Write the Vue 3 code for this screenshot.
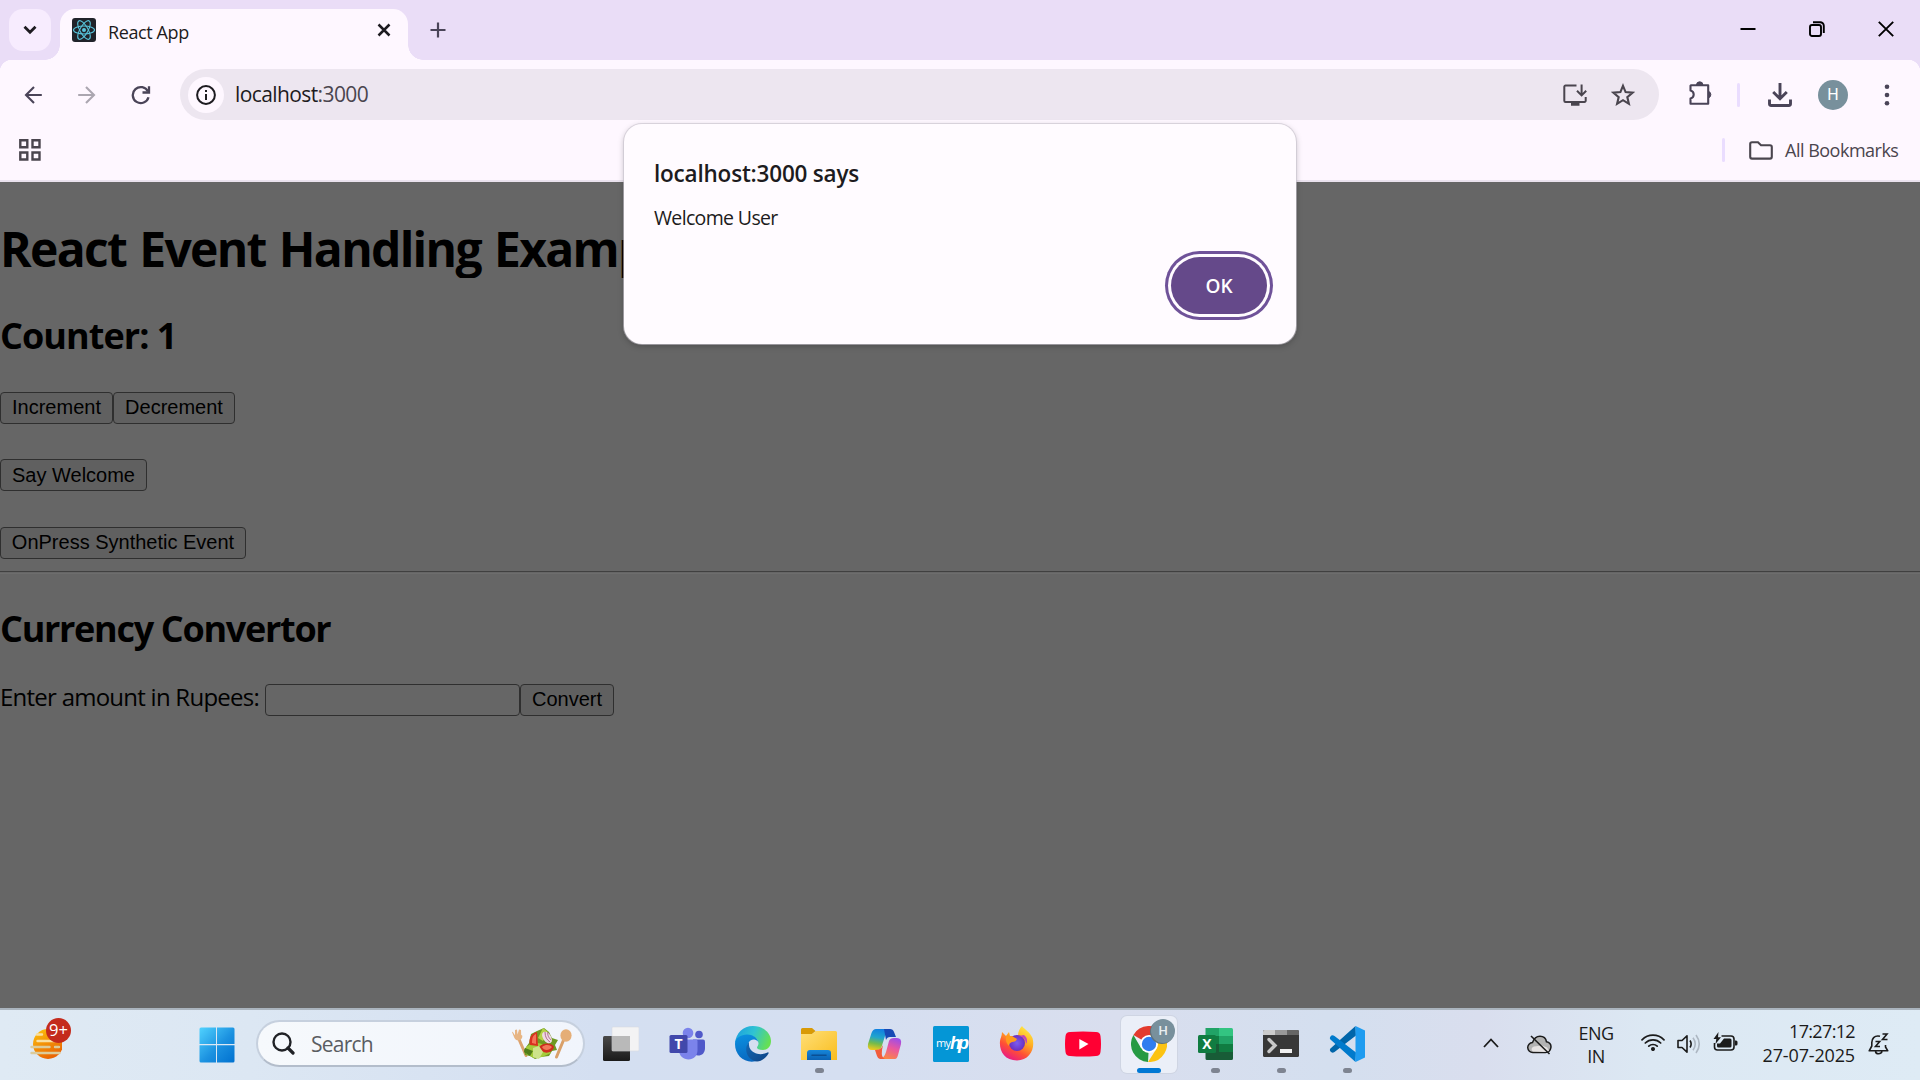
<script setup>
import { ref } from 'vue'

const count = ref(1)
const amount = ref('')
</script>

<template>
  <div class="screen">
    <header class="tabstrip">
      <button class="tab-search" aria-label="Search tabs">
        <svg width="14" height="10" viewBox="0 0 14 10"><path d="M1.500 1.800 7 7.200l5.500-5.400" fill="none" stroke="#1d1b20" stroke-width="2.800" /></svg>
      </button>
      <div class="tab">
        <svg class="favicon" width="24" height="24" viewBox="0 0 24 24">
          <rect width="24" height="24" rx="3" fill="#20232a" />
          <g fill="none" stroke="#58c4dc" stroke-width="1.100">
            <ellipse cx="12" cy="12" rx="10.500" ry="4" />
            <ellipse cx="12" cy="12" rx="10.500" ry="4" transform="rotate(60 12 12)" />
            <ellipse cx="12" cy="12" rx="10.500" ry="4" transform="rotate(120 12 12)" />
          </g>
          <circle cx="12" cy="12" r="2" fill="#58c4dc" />
        </svg>
        <span class="tab-title">React App</span>
        <svg class="tab-close" width="14" height="14" viewBox="0 0 14 14"><path d="m1.500 1.500 11 11m0-11-11 11" stroke="#1d1b20" stroke-width="2.500" /></svg>
      </div>
      <svg class="new-tab" width="16" height="16" viewBox="0 0 16 16"><path d="M8 .5v15M.5 8h15" stroke="#4a4458" stroke-width="2.200" /></svg>
      <div class="window-controls">
        <svg width="16" height="16" viewBox="0 0 16 16"><path d="M.5 8h15" stroke="#000" stroke-width="2" /></svg>
        <svg width="16" height="16" viewBox="0 0 16 16" fill="none" stroke="#000" stroke-width="1.900"><rect x="1" y="4" width="11" height="11" rx="2" /><path d="M4 1.200h7.200a3.600 3.600 0 0 1 3.600 3.600V12" /></svg>
        <svg width="16" height="16" viewBox="0 0 16 16"><path d="m.8.8 14.400 14.400m0-14.400L.8 15.200" stroke="#000" stroke-width="1.900" /></svg>
      </div>
    </header>

    <nav class="toolbar">
      <svg width="18" height="18" viewBox="0 0 18 18" class="nav-icon"><path d="M17.800 9H2m8-8L2 9l8 8" fill="none" stroke="#4a4458" stroke-width="2.100" /></svg>
      <svg width="18" height="18" viewBox="0 0 18 18" class="nav-icon"><path d="M.2 9H16M8 1l8 8-8 8" fill="none" stroke="#aba6b0" stroke-width="2.100" /></svg>
      <svg width="20" height="20" viewBox="0 0 20 20" class="nav-icon reload"><path d="M17.500 12.200A8 8 0 1 1 17 6.600" fill="none" stroke="#4a4458" stroke-width="2.300" /><path d="M18 1.200v6.300h-6.500" fill="none" stroke="#4a4458" stroke-width="2.300" /></svg>
      <div class="omnibox">
        <span class="site-info">
          <svg width="20" height="20" viewBox="0 0 20 20"><circle cx="10" cy="10" r="8.900" fill="none" stroke="#1d1b20" stroke-width="2" /><path d="M10 9v6M10 5v2" stroke="#1d1b20" stroke-width="2" /></svg>
        </span>
        <span class="url">localhost<span class="port">:3000</span></span>
        <svg class="install" width="24" height="22" viewBox="0 0 24 22" fill="none" stroke="#4a454e" stroke-width="2"><path d="M13.500 1.500h-11a1.200 1.200 0 0 0-1.200 1.200v14.100A1.200 1.200 0 0 0 2.500 18h19a1.200 1.200 0 0 0 1.200-1.200V13" /><path d="M18.600.5V11M14 6.800l4.600 4.600 4.600-4.600" /><path d="M8 20h8.500" stroke-width="3.500" /></svg>
        <svg width="24" height="24" viewBox="0 0 24 24" fill="none" stroke="#4a454e" stroke-width="2.100"><path d="m12 2.800 2.600 6.300 6.900.6-5.200 4.400 1.600 6.700L12 17.200l-5.900 3.600 1.600-6.700-5.200-4.400 6.900-.6z" /></svg>
      </div>
      <svg class="puzzle" width="25" height="25" viewBox="0 0 25 25"><path d="M3 4.200h17.200v18.600H2.500v-5.300a4.100 4.100 0 0 0 0-8V4.700z" fill="none" stroke="#4a4458" stroke-width="2.100" stroke-linejoin="round" /><path d="M8.500 4a3.200 3.200 0 0 1 6.400 0zM20.500 10.300a3.500 3.500 0 0 1 0 6.600z" fill="#4a4458" stroke="#4a4458" /></svg>
      <i class="divider"></i>
      <svg class="download" width="24" height="24" viewBox="0 0 24 24" fill="none" stroke="#4a4458" stroke-width="2.900"><path d="M12 0v15M5.200 9l6.800 6.800L18.800 9" /><path d="M1.500 16.500v4.300q0 1.700 1.700 1.700h17.600q1.700 0 1.700-1.700v-4.300" /></svg>
      <span class="avatar">H</span>
      <svg class="menu" width="6" height="22" viewBox="0 0 6 22" fill="#4a4458"><circle cx="3" cy="2.800" r="2.300" /><circle cx="3" cy="11" r="2.300" /><circle cx="3" cy="19.200" r="2.300" /></svg>
    </nav>

    <div class="bookmarks">
      <svg width="22" height="22" viewBox="0 0 22 22" fill="none" stroke="#4a454e" stroke-width="2.400"><path d="M1.300 1.300h7v7h-7zM13.500 1.300h7v7h-7zM1.300 13.500h7v7h-7zM13.500 13.500h7v7h-7z" /></svg>
      <i class="divider"></i>
      <svg class="folder" width="24" height="19" viewBox="0 0 24 19"><path d="M1.200 3q0-1.800 1.800-1.800h6l3 3h9q1.800 0 1.800 1.800v9.800q0 1.800-1.800 1.800H3q-1.800 0-1.800-1.800z" fill="none" stroke="#4a454e" stroke-width="2.100" /></svg>
      <span class="all">All Bookmarks</span>
    </div>

    <main class="page">
      <h1>React Event Handling Example</h1>
      <h2 class="counter">Counter: {{ count }}</h2>
      <div class="row">
        <button class="w-inc" @click="count++">Increment</button><button class="w-dec" @click="count--">Decrement</button>
      </div>
      <div class="row gap-a"><button class="w-say">Say Welcome</button></div>
      <div class="row gap-b"><button class="w-press">OnPress Synthetic Event</button></div>
      <hr />
      <h2 class="currency">Currency Convertor</h2>
      <div class="row gap-c">
        <label for="amount">Enter amount in Rupees:</label>
        <input id="amount" v-model="amount" type="text" /><button class="w-conv">Convert</button>
      </div>
    </main>

    <section class="dialog" role="alertdialog">
      <h3>localhost:3000 says</h3>
      <p>Welcome User</p>
      <button class="ok">OK</button>
    </section>

    <footer class="taskbar">
      <div class="widgets">
        <svg width="32" height="32" viewBox="0 0 32 32">
          <defs>
            <linearGradient id="sun" x1="0" y1="0" x2=".5" y2="1"><stop offset="0" stop-color="#fdc60b" /><stop offset="1" stop-color="#ea6504" /></linearGradient>
          </defs>
          <circle cx="18" cy="16" r="15" fill="url(#sun)" />
          <g stroke="#f9dfa0" stroke-width="2.400" stroke-linecap="round"><path d="M7 6.500h5M7.500 13H30" /><path d="M1.500 19h18M25 19h4M1.500 25h28" stroke="#dccb9a" /></g>
        </svg>
        <span class="badge">9+</span>
      </div>

      <svg class="start" width="36" height="36" viewBox="0 0 36 36">
        <defs>
          <linearGradient id="win" gradientUnits="userSpaceOnUse" x1="0" y1="0" x2="36" y2="36"><stop offset="0" stop-color="#52d4ff" /><stop offset=".55" stop-color="#1b91e0" /><stop offset="1" stop-color="#0070cf" /></linearGradient>
        </defs>
        <path d="M2 .5h15v16.500H.5V2Q.5.500 2 .5zM18 .5h16q1.500 0 1.500 1.500v15H18zM.5 18.200H17v17.300H2q-1.500 0-1.500-1.500zM18 18.200h17.500V34q0 1.500-1.500 1.500H18z" fill="url(#win)" />
      </svg>

      <div class="search">
        <svg width="23" height="23" viewBox="0 0 23 23" fill="none" stroke="#202226"><circle cx="10" cy="10" r="8.500" stroke-width="2.400" /><path d="m16 16 5 5" stroke-width="3.200" stroke-linecap="round" /></svg>
        <span>Search</span>
        <svg class="salad" width="62" height="32" viewBox="0 0 62 32">
          <path d="m7 9 8 18.500" stroke="#dca36e" stroke-width="3" stroke-linecap="round" />
          <path d="M1 4c1-1 2 3 3 3V2l2-.5.500 5L8 1.500l2 .5.200 5 1 .5c1 5-6 7-8 2z" fill="#e7b583" />
          <path d="M53 11 45.500 29" stroke="#d9a069" stroke-width="3" stroke-linecap="round" />
          <ellipse cx="55" cy="7.500" rx="5.600" ry="6.200" fill="#e5ae77" />
          <path d="m13 22 5-7 2-9 6-3 7-3 5 4 3 6 6 2-3 5 2 5-5 1-3 5-8 1-6 2-5-3-5-1z" fill="#6f9a22" />
          <path d="m15 19 8-5 8 2 9 9-9 4-8 1-8-4z" fill="#a4cc3a" />
          <path d="M19 17c-2-7 2-12 7-13l1 14z" fill="#d93120" />
          <path d="M21 15c0-5 1-8 4-9l0 10z" fill="#f47458" />
          <path d="M27 10 32 0l5 4-5 9z" fill="#b4d246" />
          <path d="M28 19c6-6 14-3 15 0-2 7-12 8-15 0z" fill="#ce2d1e" />
          <path d="M31 19c4-3 8-2 10 0-3 4-8 4-10 0z" fill="#f2785a" />
          <ellipse cx="36" cy="9.500" rx="4" ry="6.500" transform="rotate(-35 36 9.500)" fill="#efdbe4" />
          <path d="M34 4c0 5 2 8 5 10M37 4c-1 3 1 6 3 8" fill="none" stroke="#af6993" />
          <path d="m22 20 6-2 4 6-4 7-6-2z" fill="#cde38a" /><path d="m14 20 8 3-3 5-6-4z" fill="#507d1a" />
        </svg>
      </div>

      <div class="apps">
        <div class="app">
          <svg width="36" height="36" viewBox="0 0 36 36">
            <defs><linearGradient id="tv" x1="0" y1="0" x2="0" y2="1"><stop offset="0" stop-color="#494949" /><stop offset="1" stop-color="#1a1a1a" /></linearGradient></defs>
            <rect y="10" width="27" height="25" rx="1.500" fill="url(#tv)" /><rect x="9" y="1" width="27" height="24" rx="1" fill="#f3f3f4" stroke="#d9dbe0" stroke-width=".6" /><path d="M9 10h18v15H10q-1 0-1-1z" fill="#b9b9b9" />
          </svg>
        </div>
        <div class="app">
          <svg width="36" height="36" viewBox="0 0 36 36">
            <circle cx="19" cy="7" r="5.300" fill="#7b83eb" /><circle cx="30" cy="8.500" r="3.800" fill="#5059c9" />
            <path d="M24 13.500h10q2 0 2 2V22c0 5-3 7.500-7 7.500S24 26 24 23z" fill="#5059c9" /><path d="M10 13.500h17q1.500 0 1.500 1.500v9c0 6-4 9.500-9 9.500S10 30 10 24z" fill="#7b83eb" />
            <rect x=".5" y="9" width="18" height="18" rx="1.500" fill="#4148ab" /><text x="9.500" y="23" class="glyph" font-size="14" fill="#fff" text-anchor="middle">T</text>
          </svg>
        </div>
        <div class="app">
          <svg width="36" height="36" viewBox="0 0 36 36">
            <defs>
              <linearGradient id="ed1" x1="0" y1=".2" x2="1" y2=".5"><stop offset="0" stop-color="#1a9fe0" /><stop offset=".5" stop-color="#30c3d2" /><stop offset="1" stop-color="#66e052" /></linearGradient>
              <linearGradient id="ed2" x1=".3" y1="0" x2=".5" y2="1"><stop offset="0" stop-color="#0b8fdf" /><stop offset="1" stop-color="#0868c0" /></linearGradient>
              <linearGradient id="ed3" x1="0" y1="0" x2="1" y2="1"><stop offset="0" stop-color="#1168b6" /><stop offset="1" stop-color="#0f4384" /></linearGradient>
            </defs>
            <path d="M0 17C1 7 8 0 18 0s18 7 18 15c0 6-4 9-8 9s-6-1-6-2.500c0-1 1.500-2 1.500-4 0-4-4-8-10-8-5 0-10 3-13.500 7.500z" fill="url(#ed1)" />
            <path d="M0 18c0-6 6-9.500 12-9.500 7 0 11.500 4.500 11.500 9 0-3-3-4-5-4-4 0-6 4-6 8 0 7 6 12.500 12 12.500C12 39.500 0 31 0 18z" fill="url(#ed2)" />
            <path d="M14 16c-6 7-2 18 8 19.500 5 0 9-4 11.500-8 .5-1-.3-1.500-1-1-7 3.500-15 1-17.500-4-1-2-1.200-4.500-1-6.500z" fill="url(#ed3)" />
          </svg>
        </div>
        <div class="app">
          <svg width="36" height="36" viewBox="0 0 36 36">
            <defs>
              <linearGradient id="fo" x1="0" y1="0" x2="1" y2="1"><stop offset="0" stop-color="#ffdf78" /><stop offset="1" stop-color="#f9bd1d" /></linearGradient>
              <linearGradient id="fb" x1="0" y1="0" x2="0" y2="1"><stop offset="0" stop-color="#1686d9" /><stop offset="1" stop-color="#0b62b4" /></linearGradient>
            </defs>
            <path d="M0 3.500Q0 2 1.500 2H11l4 3.500h-1L10 9H0z" fill="#d99a06" /><path d="M0 8h11l4-3h19.500Q36 5 36 6.500V34H0z" fill="url(#fo)" />
            <path d="M6 34v-7q0-3 3-3h18q3 0 3 3v7z" fill="url(#fb)" /><path d="M11 29.300h14" stroke="#0b4f93" stroke-width="1.500" stroke-linecap="round" />
          </svg>
          <i class="dot"></i>
        </div>
        <div class="app">
          <svg width="36" height="36" viewBox="0 0 36 36">
            <defs>
              <linearGradient id="cp1" x1=".5" y1="0" x2=".3" y2="1"><stop offset="0" stop-color="#117fe2" /><stop offset=".4" stop-color="#20a5cc" /><stop offset=".7" stop-color="#75bb4a" /><stop offset="1" stop-color="#f0ca1d" /></linearGradient>
              <linearGradient id="cp2" x1=".7" y1="0" x2=".3" y2="1"><stop offset="0" stop-color="#a04ee6" /><stop offset=".45" stop-color="#ea579e" /><stop offset="1" stop-color="#fb8a40" /></linearGradient>
            </defs>
            <path d="M9 3h15q-4 0-6 7l-3.500 11q-1 3-4.500 3H5q-5 0-4-6L4.500 7Q6 3 9 3z" fill="url(#cp1)" />
            <path d="M17 3h6q3 0 4 3l2 5h-6q-3 0-4 3z" fill="#1749b5" />
            <path d="M28 33H12q5 0 7-7l3-11q1-3 5-3h3q5 0 4 6l-3 11q-1 4-3 4z" fill="url(#cp2)" />
            <path d="m8 24 4-.5Q15 22 16 19l-1 5q-1 8 3 9h-5q-2 0-3-3z" fill="#f15c3b" />
          </svg>
        </div>
        <div class="app">
          <svg width="36" height="36" viewBox="0 0 36 36">
            <rect width="36" height="36" rx="1.500" fill="#0496d6" />
            <text x="3" y="21" class="my" font-size="11" fill="#fff">my</text><text x="17" y="22.500" class="hp" font-size="18" fill="#fff">hp</text>
          </svg>
        </div>
        <div class="app">
          <svg width="36" height="36" viewBox="0 0 36 36">
            <defs>
              <linearGradient id="ff" x1=".85" y1="0" x2=".3" y2="1"><stop offset="0" stop-color="#fff04a" /><stop offset=".4" stop-color="#ffad22" /><stop offset=".7" stop-color="#ff5034" /><stop offset="1" stop-color="#e81888" /></linearGradient>
              <radialGradient id="fp"><stop offset="0" stop-color="#7a5df0" /><stop offset="1" stop-color="#6a2fc0" /></radialGradient>
            </defs>
            <path d="M23 0c2 3 8 6 10.500 12 3 11-3 22.500-15.500 22.500S0 25 1 15c.3-3 2-5 2-9l4 4 3-4 1 4h8c0-5 2-8 4-10z" fill="url(#ff)" />
            <circle cx="18" cy="17" r="8" fill="url(#fp)" />
            <path d="M7 10q6-1 11 3-1 3-5 3-3 1-3 4-4-4-3-10z" fill="#ff9a1c" /><path d="M19 10q7 0 8 8 3-5-2-9z" fill="#c446b8" />
          </svg>
        </div>
        <div class="app">
          <svg width="36" height="36" viewBox="0 0 36 36"><path d="M5 6q13-1 26 0 4 0 4.500 4 1 8 0 16-.5 4-4.500 4-13 1-26 0-4 0-4.500-4-1-8 0-16Q1 6 5 6z" fill="#ff0033" /><path d="M14.300 13v10.500L23.500 18z" fill="#fff" /></svg>
        </div>
        <div class="app active">
          <svg width="36" height="36" viewBox="0 0 36 36">
            <path d="M18 18 2.400 9a18 18 0 0 1 31.200 0z" fill="#e33b2e" /><path d="M18 18 17 36A18 18 0 0 1 2.400 9L10 22z" fill="#269a43" /><path d="M18 9h15.600A18 18 0 0 1 17 36l9-14z" fill="#fcc312" />
            <circle cx="18" cy="18" r="9" fill="#fff" /><circle cx="18" cy="18" r="7.200" fill="#2f7df0" />
          </svg>
          <span class="profile">H</span>
          <i class="dot wide"></i>
        </div>
        <div class="app">
          <svg width="36" height="36" viewBox="0 0 36 36">
            <path d="M8.500 2H22v8H8.500z" fill="#21a366" /><path d="M22 2h12.500q1.500 0 1.500 1.500V10H22z" fill="#33c481" /><path d="M8.500 10H22v8H8.500z" fill="#107c41" /><path d="M22 10h14v8H22z" fill="#21a366" /><path d="M22 18h14v8H22z" fill="#107c41" /><path d="M8.500 18H22v8h14v6.500q0 1.500-1.500 1.500H10q-1.500 0-1.500-1.500z" fill="#185c37" />
            <rect x="1" y="9" width="18" height="18" rx="1.500" fill="#107c41" /><text x="10" y="23" class="glyph" font-size="14" fill="#fff" text-anchor="middle">X</text>
          </svg>
          <i class="dot"></i>
        </div>
        <div class="app">
          <svg width="36" height="36" viewBox="0 0 36 36">
            <rect y="4" width="36" height="27" rx="1.500" fill="#383838" /><path d="M0 9V5.500Q0 4 1.500 4H12v5z" fill="#ccc" /><path d="M12 4h12v5H12z" fill="#999" /><path d="M24 4h10.500Q36 4 36 5.500V9H24z" fill="#666" />
            <path d="m6 13.500 6 6-6 6" fill="none" stroke="#c9c9c9" stroke-width="3.400" stroke-linecap="round" /><rect x="17" y="23" width="12" height="4" fill="#f0f0f0" />
          </svg>
          <i class="dot"></i>
        </div>
        <div class="app">
          <svg width="36" height="36" viewBox="0 0 36 36">
            <path d="M26.500 0 2 22q-2 1.500-.5 3.500 1.500 2 4 .5L27 9.500z" fill="#0065a9" /><path d="M26.500 36 2 14q-2-1.500-.5-3.500 1.500-2 4-.5L27 26.500z" fill="#007acc" /><path d="M26.500 0 36 4.500v27L26.500 36z" fill="#1f9cf0" />
          </svg>
          <i class="dot"></i>
        </div>
      </div>

      <div class="tray">
        <svg class="chev" width="16" height="10" viewBox="0 0 16 10"><path d="m1 9 7-7.500L15 9" fill="none" stroke="#1b1b1b" stroke-width="1.800" /></svg>
        <svg class="cloud" width="25" height="20" viewBox="0 0 25 20"><path d="M6 17.500a4.900 4.900 0 0 1-.5-10C7 3 10 1.200 13 1.200c3.500 0 6 2.500 6.500 5.600 7 1.500 5 10.700-1 10.700z" fill="#b3b3b3" stroke="#1b1b1b" stroke-width="1.500" /><path d="M6 16.500c-2-1-2-4 1-5l8-1 5 2 2 3q-1 1.500-3 1.500z" fill="#e6e3e3" /><path d="m4 1 18.500 18" stroke="#1b1b1b" stroke-width="1.600" /></svg>
        <div class="lang"><span>ENG</span><span>IN</span></div>
        <svg class="wifi" width="24" height="18" viewBox="0 0 24 18" fill="none" stroke="#1b1b1b" stroke-width="1.700" stroke-linecap="round"><path d="M1 6.800a15.500 15.500 0 0 1 22 0M4.300 10a11 11 0 0 1 15.400 0M7.800 13.200a6 6 0 0 1 8.400 0" /><circle cx="12" cy="16" r="1.200" fill="#1b1b1b" /></svg>
        <svg class="vol" width="24" height="20" viewBox="0 0 24 20" fill="none" stroke="#1b1b1b" stroke-width="1.600"><path d="M1 6.500h4L10 1.800v16.400L5 13.500H1z" stroke-linejoin="round" /><path d="M13 6.500q2.300 3.500 0 7" /><path d="M16 3.800q4.500 6.200 0 12.400M19 1q6.500 9 0 18" stroke="#adb7c2" /></svg>
        <svg class="bat" width="25" height="20" viewBox="0 0 25 20"><path d="M8.500 4H18q3 0 3 3v8q0 3-3 3H4.500q-3 0-3-3v-4" fill="none" stroke="#1b1b1b" stroke-width="1.600" /><path d="M11 6.500h6q1.500 0 1.500 1.500v6q0 1.500-1.500 1.500H5.500Q4 15.500 4 14v-2.500h3zM22 8.500h1q1.500 0 1.500 1.500v2q0 1.500-1.500 1.500h-1zM5.500 0 .5 7h2.800L2.500 12 8 5.200H5z" fill="#1b1b1b" /></svg>
        <div class="clock"><span class="time">17:27:12</span><span class="date">27-07-2025</span></div>
        <svg class="bell" width="22" height="22" viewBox="0 0 22 22" fill="none" stroke="#1b1b1b" stroke-width="1.600"><path d="M12 3.200C6 2 3.800 6 3.800 9.500V13L1.200 17.800h18.600L17.500 14v-2M7.500 18.500c.5 3 5.500 3 6.500 0" stroke-linejoin="round" /><path d="M7.500 8.500h4.200l-4.200 5h4.500M14.500 1h4.500l-4.500 5.500h5" /></svg>
      </div>
    </footer>
  </div>
</template>

<style>
html,
body {
  margin: 0;
  overflow: hidden;
}
</style>

<style scoped>
* {
  box-sizing: border-box;
}
.screen {
  position: relative;
  display: flex;
  flex-direction: column;
  width: 1920px;
  height: 1080px;
  overflow: hidden;
  background: #666;
  font-family: "Open Sans", "Noto Sans", sans-serif;
  color: #1d1b20;
}
svg {
  display: block;
  flex: none;
}
h1,
h2,
h3,
p,
hr {
  margin: 0;
}
button {
  padding: 0;
  font-family: inherit;
}

/* tab strip */
.tabstrip {
  display: flex;
  flex: none;
  height: 60px;
  background: #eaddf7;
}
.tab-search {
  display: flex;
  align-items: center;
  justify-content: center;
  width: 42px;
  height: 42px;
  margin: 9px 9px 0;
  border: 0;
  border-radius: 14px;
  background: #f7ecfe;
}
.tab {
  position: relative;
  display: flex;
  width: 348px;
  height: 51px;
  margin-top: 9px;
  padding: 9px 17px 0 12px;
  border-radius: 15px 15px 0 0;
  background: #fef7ff;
}
.tab::before,
.tab::after {
  content: "";
  position: absolute;
  bottom: 0;
  width: 15px;
  height: 15px;
}
.tab::before {
  left: -15px;
  background: radial-gradient(circle at 0 0, transparent 14.5px, #fef7ff 15px);
}
.tab::after {
  right: -15px;
  background: radial-gradient(circle at 100% 0, transparent 14.5px, #fef7ff 15px);
}
.tab-title {
  margin-left: 12px;
  font-size: 18px;
  line-height: 28px;
  letter-spacing: -0.4px;
}
.tab-close {
  margin: 5px 0 0 auto;
}
.new-tab {
  margin: 22px 0 0 22px;
}
.window-controls {
  display: flex;
  gap: 53px;
  margin: 21px 26px 0 auto;
}

/* toolbar */
.toolbar {
  display: flex;
  flex: none;
  align-items: center;
  height: 70px;
  padding-left: 24px;
  background: radial-gradient(circle at 12px 12px, #fef7ff 12px, #eaddf7 12.5px) 0 0 / 12px 12px no-repeat,
    radial-gradient(circle at 0 12px, #fef7ff 12px, #eaddf7 12.5px) 100% 0 / 12px 12px no-repeat, #fef7ff;
}
.nav-icon {
  margin-right: 36px;
}
.reload {
  margin: 0 29px 0 -1px;
}
.omnibox {
  display: flex;
  align-items: center;
  width: 1479px;
  height: 51px;
  margin-top: -1px;
  padding: 0 24px 0 8px;
  border-radius: 26px;
  background: #ede6f0;
}
.site-info {
  display: flex;
  align-items: center;
  justify-content: center;
  width: 36px;
  height: 36px;
  border-radius: 50%;
  background: #fef7ff;
}
.url {
  margin: -1px 0 0 11px;
  font-size: 21px;
  line-height: 28px;
  letter-spacing: -0.6px;
}
.port {
  color: #4a454e;
}
.install {
  margin: 0 24px 0 auto;
}
.puzzle {
  margin: -4px 24px 0 29px;
}
.divider {
  width: 3px;
  height: 24px;
  border-radius: 1.5px;
  background: #eaddff;
}
.download {
  margin-left: 28px;
}
.avatar {
  width: 30px;
  height: 30px;
  margin-left: 26px;
  border-radius: 50%;
  background: #78909c;
  color: #fff;
  font: 400 16px/30px Roboto, sans-serif;
  text-align: center;
}
.menu {
  margin-left: 36px;
}

/* bookmarks bar */
.bookmarks {
  display: flex;
  flex: none;
  align-items: center;
  height: 52px;
  padding: 0 21px 10px 19px;
  border-bottom: 2px solid #eae2ee;
  background: #fef7ff;
}
.bookmarks .divider {
  margin-left: auto;
}
.folder {
  margin: 0 12px 0 24px;
}
.all {
  width: 114px;
  color: #4a454e;
  font-size: 18px;
  line-height: 26px;
  letter-spacing: -0.5px;
  white-space: nowrap;
}

/* page content behind the modal scrim */
.page {
  flex: 1;
  padding-top: 36px;
  background: #666;
  color: #000;
}
h1 {
  width: 625px;
  height: 60px;
  overflow: hidden;
  font-size: 48px;
  line-height: 62px;
  letter-spacing: -1.7px;
  white-space: nowrap;
  word-spacing: 2.4px;
}
h2 {
  font-size: 36px;
  line-height: 48px;
}
.counter {
  margin: 34px 0 32px;
  letter-spacing: -0.95px;
}
.currency {
  margin: 31px 0 31px;
  letter-spacing: -1.3px;
}
.row {
  display: flex;
  height: 32px;
}
.gap-a {
  margin-top: 35px;
}
.gap-b {
  margin-top: 36px;
}
.page button,
.page input {
  height: 32px;
  padding: 0 0 2px;
  border: 1px solid #2f2f2f;
  border-radius: 4px;
  background: #606060;
  color: #000;
  font: 20px/28px "Liberation Sans", sans-serif;
}
.page input {
  width: 255px;
  background: #666;
}
.w-inc {
  width: 113px;
}
.w-dec {
  width: 122px;
}
.page .w-say {
  width: 147px;
  padding: 0;
}
.w-press {
  width: 246px;
}
.w-conv {
  width: 94px;
}
hr {
  height: 3px;
  margin-top: 12px;
  border: 0;
  border-top: 1px solid #404040;
  border-bottom: 1px solid #6d6d6d;
}
label {
  width: 265px;
  font-size: 24px;
  line-height: 25px;
  letter-spacing: -0.75px;
  white-space: nowrap;
}

/* alert dialog */
.dialog {
  position: absolute;
  top: 124px;
  left: 624px;
  display: flex;
  flex-direction: column;
  width: 672px;
  height: 220px;
  padding: 35px 29px 0 30px;
  border-radius: 18px;
  background: #fffbff;
  box-shadow: 0 0 0 1px rgba(200, 195, 205, 0.6), 0 2px 6px rgba(0, 0, 0, 0.25);
}
.dialog h3 {
  font-size: 22.5px;
  font-weight: 600;
  line-height: 30px;
  letter-spacing: -0.2px;
}
.dialog p {
  margin-top: 16px;
  font-size: 19.5px;
  line-height: 26px;
  letter-spacing: -0.65px;
}
.ok {
  align-self: flex-end;
  width: 96px;
  height: 57px;
  margin-top: 26px;
  border: 0;
  border-radius: 29px;
  background: #65498a;
  box-shadow: 0 0 0 3px #fffbff, 0 0 0 6px #6f5299;
  color: #fff;
  font-size: 19px;
  font-weight: 600;
}

/* taskbar */
.taskbar {
  display: flex;
  flex: none;
  height: 72px;
  border-top: 2px solid #aab4be;
  background: linear-gradient(90deg, #dfeaf4 0, #dce7f3 250px, #d4dff1 600px, #d5dff1 850px, #d9deee 1120px, #d4dfef 1330px, #d9deee 1480px, #dce8f3 1650px, #deebf5 100%);
}
.widgets {
  position: relative;
  width: 60px;
  height: 32px;
  margin: 18px 0 0 30px;
}
.badge {
  position: absolute;
  top: -10px;
  left: 16px;
  width: 25px;
  height: 25px;
  border-radius: 50%;
  background: #c42b1c;
  color: #fff;
  font-size: 16.5px;
  line-height: 24px;
  text-align: center;
}
.start {
  margin: 17px 0 0 109px;
}
.search {
  display: flex;
  align-items: center;
  width: 329px;
  height: 47px;
  margin: 10px 0 0 21px;
  padding: 0 10px 0 14px;
  border: 2px solid #c6d0de;
  border-bottom-color: #b3bdcb;
  border-radius: 24px;
  background: linear-gradient(90deg, #f6f9fc, #f1f5fc);
}
.search span {
  margin-left: 16px;
  color: #5a5d62;
  font-size: 21px;
  line-height: 28px;
  letter-spacing: -0.75px;
}
.salad {
  margin-left: auto;
}
.apps {
  display: flex;
  gap: 10px;
  margin: 6px 0 0 8px;
}
.app {
  position: relative;
  width: 56px;
  height: 57px;
  padding: 10px;
  border-radius: 6px;
}
.app.active {
  background: #ebeff8;
  box-shadow: 0 0 0 1px #cfd5e3;
}
.dot {
  position: absolute;
  bottom: 0;
  left: 23.5px;
  width: 9px;
  height: 5px;
  border-radius: 3px;
  background: #7e8491;
}
.dot.wide {
  left: 16px;
  width: 24px;
  background: #0078d4;
}
.profile {
  position: absolute;
  top: 3px;
  left: 30px;
  width: 24px;
  height: 24px;
  border-radius: 50%;
  background: #78909c;
  box-shadow: -1px 1px 0 #5d727d;
  color: #e8eef1;
  font: 500 13px/24px Roboto, sans-serif;
  text-align: center;
}
.glyph {
  font-family: "Open Sans", sans-serif;
  font-weight: 700;
}
.my {
  font-family: "Open Sans", sans-serif;
  letter-spacing: -0.6px;
}
.hp {
  font-family: "Liberation Sans", sans-serif;
  font-style: italic;
  font-weight: 700;
  letter-spacing: -3px;
}
.tray {
  display: flex;
  flex: 1;
  justify-content: flex-end;
  padding-right: 30px;
  color: #1b1b1b;
  font-size: 18px;
  line-height: 24px;
}
.chev {
  margin: 28px 28px 0 0;
}
.cloud {
  margin: 25px 24px 0 0;
}
.lang,
.clock {
  display: flex;
  flex-direction: column;
}
.lang {
  align-items: center;
  width: 40px;
  margin: 12px 25px 0 0;
  letter-spacing: -0.5px;
}
.lang span {
  line-height: 23px;
}
.wifi {
  margin: 23px 12px 0 0;
}
.vol {
  margin: 24px 12px 0 0;
}
.bat {
  margin: 22px 0 0;
}
.clock {
  align-items: flex-end;
  width: 117px;
  margin-top: 9px;
}
.time {
  letter-spacing: -0.65px;
}
.date {
  letter-spacing: -0.15px;
}
.bell {
  margin: 23px 0 0 13px;
}
</style>
